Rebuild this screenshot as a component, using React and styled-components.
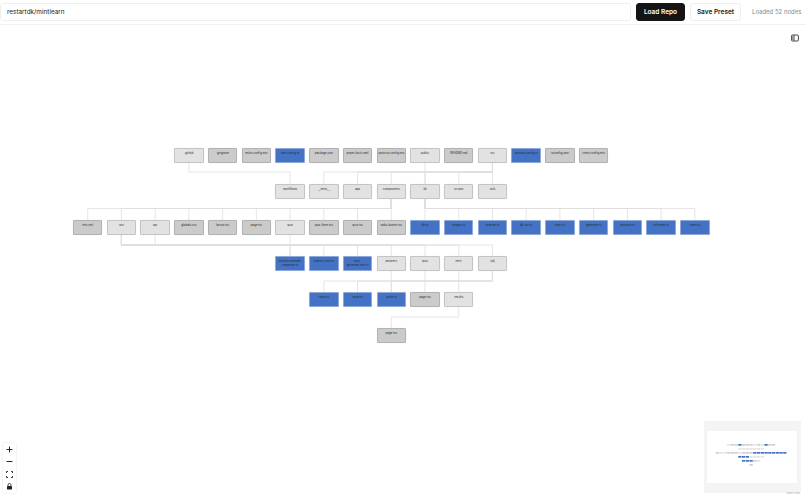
import React from "react";
import styled, { createGlobalStyle } from "styled-components";

const Global = createGlobalStyle`
  html, body { margin: 0; padding: 0; background: #fff; height: 100%; overflow: hidden; }
  #root { height: 100%; }
`;

const Page = styled.div`
  display: flex; flex-direction: column; width: 806px; height: 495px; background: #fff;
  font-family: Inter, "Liberation Sans", sans-serif; color: #1a1a1a;
`;
const Toolbar = styled.header`
  display: flex; align-items: center; gap: 5px; height: 25px; box-sizing: border-box;
  padding: 0 7px 1px 0; border-bottom: 1px solid #f1f1f1; opacity: .999;
`;
const RepoInput = styled.input`
  flex: 1; min-width: 0; height: 18px; box-sizing: border-box; padding: 0 6px;
  border: 1px solid #efefef; border-radius: 3px; outline: none; background: transparent;
  font: 400 6.4px Inter, "Liberation Sans", sans-serif; color: #222;
`;
const Button = styled.button`
  height: 18px; box-sizing: border-box; padding: 0; width: ${p => p.$w}px; border-radius: 3px;
  font: 600 6.5px Inter, "Liberation Sans", sans-serif; cursor: pointer;
  border: 1px solid ${p => (p.$dark ? "#141414" : "#efefef")};
  background: ${p => (p.$dark ? "#141414" : "#fff")};
  color: ${p => (p.$dark ? "#fff" : "#1a1a1a")};
`;
const Status = styled.span`
  font-size: 6px; color: #8a8a8a; margin-left: 6px; white-space: nowrap; width: 47px;
`;
const Canvas = styled.main`
  position: relative; flex: 1; overflow: hidden; opacity: .999;
`;
const Edges = styled.svg`
  position: absolute; left: 0; top: 0;
`;
const NodeBox = styled.div`
  position: absolute; width: 29.4px; height: 14.6px; box-sizing: border-box; padding: 3px 1px 0;
  border: 0.7px solid ${p => ({ dir: "#c4c4c4", file: "#b2b2b2", code: "#8ea9d8" }[p.$kind])};
  border-radius: 1px;
  background: ${p => ({ dir: "#e2e2e2", file: "#cbcbcb", code: "#4473c5" }[p.$kind])};
  color: #2a2a2a; font-size: 2.9px; line-height: 3.9px; text-align: center; white-space: pre-line;
  box-shadow: 0 0 1px rgba(0,0,0,.12);
`;
const Panel = styled.button`
  position: absolute; right: 4px; top: 6px; width: 14px; height: 14px; padding: 0; border: 0;
  background: transparent; display: flex; align-items: center; justify-content: center; color: #333;
`;
const Controls = styled.div`
  position: absolute; left: 3px; bottom: 2px; width: 13px; display: flex; flex-direction: column;
  background: #fff; box-shadow: 0 0 2px rgba(0,0,0,.12);
`;
const ControlButton = styled.button`
  height: 12.5px; padding: 0; border: 0; background: #fefefe; color: #222;
  display: flex; align-items: center; justify-content: center;
`;
const MiniMap = styled.svg`
  position: absolute; left: 704px; top: 396px; display: block;
`;
const Attribution = styled.span`
  position: absolute; right: 6px; bottom: 0; font-size: 2.6px; line-height: 3px; color: #aaa; white-space: nowrap;
`;

const col = i => 73 + i * 33.73;
const rows = [148, 184, 220, 256, 292, 328];
const n = (label, c, r, kind) => ({ label, x: col(c), y: rows[r], kind });

const NODES = [
  n(".github", 3, 0, "dir"), n(".gitignore", 4, 0, "file"), n("eslint.config.mjs", 5, 0, "file"),
  n("next.config.ts", 6, 0, "code"), n("package.json", 7, 0, "file"), n("pnpm-lock.yaml", 8, 0, "file"),
  n("postcss.config.mjs", 9, 0, "file"), n("public", 10, 0, "dir"), n("README.md", 11, 0, "file"),
  n("src", 12, 0, "dir"), n("tailwind.config.ts", 13, 0, "code"), n("tsconfig.json", 14, 0, "file"),
  n("vitest.config.mts", 15, 0, "file"),
  n("workflows", 6, 1, "dir"), n("__tests__", 7, 1, "dir"), n("app", 8, 1, "dir"),
  n("components", 9, 1, "dir"), n("lib", 10, 1, "dir"), n("scripts", 11, 1, "dir"), n("utils", 12, 1, "dir"),
  n("test.yml", 0, 2, "file"), n("unit", 1, 2, "dir"), n("api", 2, 2, "dir"), n("globals.css", 3, 2, "file"),
  n("layout.tsx", 4, 2, "file"), n("page.tsx", 5, 2, "file"), n("quiz", 6, 2, "dir"),
  n("quiz-form.tsx", 7, 2, "file"), n("quiz.tsx", 8, 2, "file"), n("radix-button.tsx", 9, 2, "file"),
  n("db.ts", 10, 2, "code"), n("inngest.ts", 11, 2, "code"), n("queries.ts", 12, 2, "code"),
  n("db-init.ts", 13, 2, "code"), n("inject.ts", 14, 2, "code"), n("generate.ts", 15, 2, "code"),
  n("process.ts", 16, 2, "code"), n("schemas.ts", 17, 2, "code"), n("types.ts", 18, 2, "code"),
  n("mistral-example-\nresponse.ts", 6, 3, "code"), n("queries-test.ts", 7, 3, "code"),
  n("quiz-\ngenerate-test.ts", 8, 3, "code"), n("answers", 9, 3, "dir"), n("quiz", 10, 3, "dir"),
  n("retry", 11, 3, "dir"), n("[id]", 12, 3, "dir"),
  n("route.ts", 7, 4, "code"), n("route.ts", 8, 4, "code"), n("route.ts", 9, 4, "code"),
  n("page.tsx", 10, 4, "file"), n("results", 11, 4, "dir"),
  n("page.tsx", 9, 5, "file"),
];

const cx = c => col(c) + 14.7;
const T = 25;
const path = [
  [3, 162.6, 172, [6]],
  [12, 162.6, 172, [7, 8, 9, 10, 11, 12]],
  [9, 198.6, 208.5, [0, 1, 2, 3, 4, 5, 6, 7, 8, 9]],
  [10, 198.6, 208.5, [10, 11, 12, 13, 14, 15, 16, 17, 18]],
  [1, 234.6, 245, [6, 7, 8, 9, 10, 11, 12]],
  [6, 234.6, 245, [6]],
  [12, 270.6, 281, [7, 8, 9]],
  [9, 270.6, 281, [9]],
  [10, 270.6, 281, [10]],
  [11, 270.6, 281, [11]],
  [11, 306.6, 317, [9]],
];
const targetY = { 172: 184, 208.5: 220, 245: 256, 281: 292, 317: 328 };
const edgePaths = [];
path.forEach(([from, y0, ym, tos]) => {
  tos.forEach(to => {
    edgePaths.push(`M${cx(from)} ${y0 - T}V${ym - T}H${cx(to)}V${targetY[ym] - T}`);
  });
});
edgePaths.push(`M${cx(10)} ${162.6 - T}V${184 - T}`);
edgePaths.push(`M${cx(2)} ${234.6 - T}V${245 - T}`);

const mmX = x => 23 + (x - 174.2) * 0.111;
const mmY = y => 23 + (y - 148) * 0.111;
const mmFill = { dir: "#e4e4e4", file: "#cfcfcf", code: "#4473c5" };

export default function App() {
  return (
    <Page>
      <Global />
      <Toolbar>
        <RepoInput defaultValue="restartdk/mintlearn" />
        <Button $dark $w={49}>Load Repo</Button>
        <Button $w={51}>Save Preset</Button>
        <Status>Loaded 52 nodes</Status>
      </Toolbar>
      <Canvas>
        <Edges width="806" height="470" viewBox="0 0 806 470" fill="none">
          {edgePaths.map((d, i) => (
            <path key={i} d={d} stroke="#dedede" strokeWidth="0.8" />
          ))}
        </Edges>
        {NODES.map((nd, i) => (
          <NodeBox key={i} $kind={nd.kind} style={{ left: nd.x, top: nd.y - T }}>{nd.label}</NodeBox>
        ))}
        <Panel aria-label="Toggle panel">
          <svg width="8" height="8" viewBox="0 0 8 8" fill="none" stroke="#333" strokeWidth="0.9">
            <rect x="0.6" y="1" width="6.8" height="6" rx="0.8" />
            <path d="M3 1v6" />
            <path d="M1 1.4h2v5.2H1z" fill="#999" stroke="none" />
          </svg>
        </Panel>
        <Controls>
          <ControlButton aria-label="Zoom in">
            <svg width="7" height="7" viewBox="0 0 7 7" stroke="#222" strokeWidth="1"><path d="M3.5 .6v5.8M.6 3.5h5.8" /></svg>
          </ControlButton>
          <ControlButton aria-label="Zoom out">
            <svg width="7" height="7" viewBox="0 0 7 7" stroke="#222" strokeWidth="1"><path d="M.6 3.5h5.8" /></svg>
          </ControlButton>
          <ControlButton aria-label="Fit view">
            <svg width="7" height="7" viewBox="0 0 7 7" fill="none" stroke="#222" strokeWidth=".9"><path d="M.5 2V.5H2M5 .5h1.5V2M6.500 5v1.500H5M2 6.500H.5V5" /></svg>
          </ControlButton>
          <ControlButton aria-label="Lock">
            <svg width="7" height="7" viewBox="0 0 7 7"><path d="M2 3V2a1.500 1.500 0 0 1 3 0v1" fill="none" stroke="#222" strokeWidth=".8" /><rect x="1" y="3" width="5" height="3.600" rx=".5" fill="#222" /></svg>
          </ControlButton>
        </Controls>
        <MiniMap width="97" height="72" viewBox="0 0 97 72">
          <rect width="97" height="72" fill="#f4f4f4" />
          <rect x="3" y="10" width="90" height="52" fill="#fff" />
          {NODES.map((nd, i) => (
            <rect key={i} x={mmX(nd.x)} y={mmY(nd.y)} width="3.300" height="1.700" fill={mmFill[nd.kind]} />
          ))}
        </MiniMap>
        <Attribution>React Flow</Attribution>
      </Canvas>
    </Page>
  );
}
